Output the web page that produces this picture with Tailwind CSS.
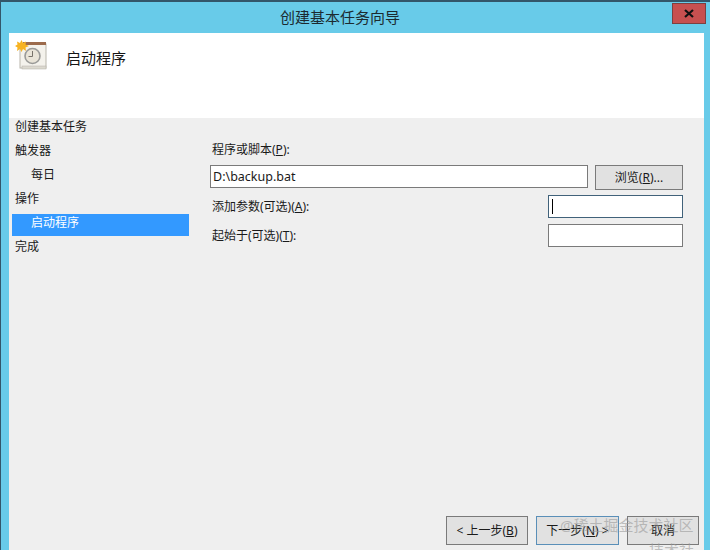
<!DOCTYPE html>
<html lang="zh-CN">
<head>
  <meta charset="UTF-8" />
  <title>创建基本任务向导</title>
  <script src="https://cdn.jsdelivr.net/npm/@tailwindcss/browser@4"></script>
</head>
<body class="bg-[#68cbe9] font-['Noto_Sans','Noto_Sans_CJK_SC',sans-serif] text-[12px] text-[#1a1a1a] overflow-hidden">
  <div class="relative w-[710px] h-[550px] overflow-hidden flex flex-col border-t-2 border-l border-[#33566a] bg-[#68cbe9]">

    <!-- title bar -->
    <div class="h-[31px] shrink-0 flex items-start">
      <div class="flex-1 pl-[7px] text-center text-[15px] leading-[30px] text-[#1c2a30]">创建基本任务向导</div>
      <div class="w-[34px] h-[21px] mr-[4px] mt-px flex items-center justify-center bg-[#c75050] border border-[#7d4040]">
        <svg width="10" height="9" viewBox="0 0 10 9"><path d="M1 1 L9 8 M9 1 L1 8" stroke="#111" stroke-width="2.2" /></svg>
      </div>
    </div>

    <div class="flex-1 ml-[8px] mr-[6px] flex flex-col min-h-0">
      <!-- header -->
      <div class="h-[85px] shrink-0 bg-white flex items-start pl-[6px] pt-[7px]">
        <svg width="32" height="32" viewBox="0 0 32 32" class="shrink-0">
          <rect x="5" y="4" width="26" height="24" fill="#f4f2ec" stroke="#b9b6ac" />
          <rect x="7" y="26" width="24" height="3" fill="#dcd9d0" stroke="#b3b0a6" stroke-width="0.5" />
          <rect x="8" y="2" width="23" height="3" fill="#9c6b4c" />
          <circle cx="17.5" cy="16" r="7.5" fill="#e9e4d8" stroke="#9a9a98" stroke-width="1.6" />
          <path d="M17.5 11 V16.5 H13.5" fill="none" stroke="#77726a" stroke-width="1" />
          <path d="M6.5 0 L8 3 L11 1.5 L10.5 4.5 L14 6 L10.5 7.5 L11 11 L8 9 L6.5 12 L5 9 L2 11 L2.5 7.5 L-0 6 L2.5 4.5 L2 1.5 L5 3 Z" fill="#f7b321" />
        </svg>
        <div class="ml-[19px] mt-[6px] text-[15px] leading-[24px] text-[#151515]">启动程序</div>
      </div>

      <!-- body -->
      <div class="flex-1 min-h-0 bg-[#efefef] flex flex-col">
        <div class="flex-1 flex min-h-0">
          <!-- steps -->
          <div class="w-[177px] shrink-0 ml-[3px] pt-[-1px] flex flex-col">
            <div class="h-[24px] pl-[3px] leading-[18px]">创建基本任务</div>
            <div class="h-[24px] pl-[3px] leading-[18px]">触发器</div>
            <div class="h-[24px] pl-[19px] leading-[18px]">每日</div>
            <div class="h-[24px] pl-[3px] leading-[18px]">操作</div>
            <div class="h-[22px] mb-[2px] pl-[19px] leading-[18px] bg-[#3399ff] text-white">启动程序</div>
            <div class="h-[24px] pl-[3px] leading-[18px]">完成</div>
          </div>

          <!-- form -->
          <div class="flex-1 pl-[21px] pr-[21px] pt-[23px]">
            <div class="pl-[2px] h-[18px] leading-[18px]">程序或脚本(<span class="underline">P</span>):</div>
            <div class="flex mt-[6px] gap-[7px]">
              <div class="w-[378px] h-[23px] bg-white border border-[#7a7a7a] pl-[2px] text-[12.5px] leading-[21px]">D:\backup.bat</div>
              <div class="w-[88px] h-[25px] bg-[#e1e1e1] border border-[#7a7a7a] text-center leading-[24px]">浏览(<span class="underline">R</span>)...</div>
            </div>
            <div class="flex mt-[5px] items-center justify-between">
              <div class="pl-[2px] leading-[18px]">添加参数(可选)(<span class="underline">A</span>):</div>
              <div class="w-[135px] h-[23px] bg-white border border-[#41627a] flex items-center pl-[3px]">
                <div class="w-px h-[15px] bg-black"></div>
              </div>
            </div>
            <div class="flex mt-[6px] items-center justify-between">
              <div class="pl-[2px] leading-[18px]">起始于(可选)(<span class="underline">T</span>):</div>
              <div class="w-[135px] h-[23px] bg-white border border-[#7a7a7a]"></div>
            </div>
          </div>
        </div>

        <!-- footer buttons -->
        <div class="h-[34px] shrink-0 flex items-start pl-[437px]">
          <div class="w-[82px] h-[29px] bg-[#e1e1e1] border border-[#7a7a7a] text-center leading-[27px]">&lt; 上一步(<span class="underline">B</span>)</div>
          <div class="w-[83px] h-[29px] ml-[8px] bg-[#e1e1e1] border border-[#5a8fb8] text-center leading-[27px]">下一步(<span class="underline">N</span>) &gt;</div>
          <div class="w-[72px] h-[29px] ml-[8px] bg-[#e1e1e1] border border-[#7a7a7a] text-center leading-[27px]">取消</div>
        </div>
      </div>
    </div>

    <!-- watermark -->
    <div class="absolute left-[559px] top-[513px] whitespace-nowrap text-[15px] leading-[20px] text-[#9a9a9a]/60">@稀土掘金技术社区</div>
    <div class="absolute left-[648px] top-[538px] whitespace-nowrap text-[15px] leading-[20px] text-[#9a9a9a]/60">技术社</div>
  </div>
</body>
</html>
